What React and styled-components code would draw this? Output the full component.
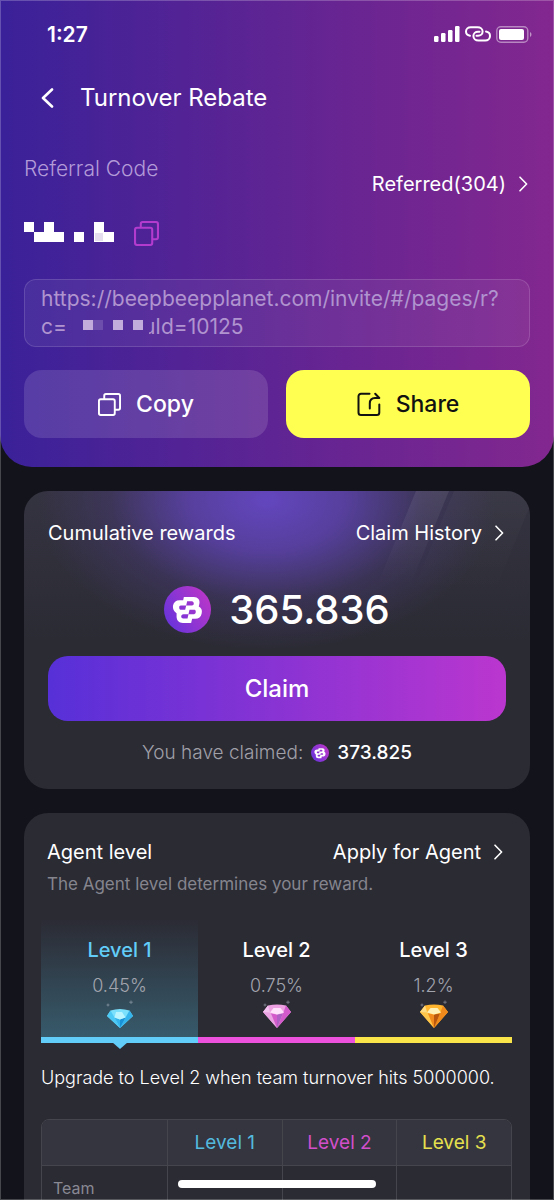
import React from "react";
import styled, { createGlobalStyle } from "styled-components";

const GlobalStyle = createGlobalStyle`
  * { box-sizing: border-box; }
  html, body { margin: 0; background: #13131b; }
  body { font-family: Inter, "Liberation Sans", sans-serif; color: #fff; }
  button { font: inherit; border: 0; cursor: pointer; }
  a { color: inherit; text-decoration: none; }
  h1, h2, p { margin: 0; font-weight: 400; }
  svg { display: block; flex: none; }
`;

const Page = styled.div`
  height: 100vh;
  overflow-y: auto;
  scrollbar-width: none;
  background: #13131b;
  &::after {
    content: "";
    position: fixed;
    inset: 0;
    border: 1px solid rgba(255, 255, 255, 0.22);
    pointer-events: none;
  }
`;

const Header = styled.header`
  padding: 20px 24px 29px;
  border-radius: 0 0 32px 32px;
  background: linear-gradient(90deg, #3a2199 0%, #5f2493 50%, #83278f 100%);
`;

const StatusBar = styled.div`
  display: flex;
  align-items: center;
  justify-content: space-between;
  height: 28px;
  padding-left: 23px;
  font-size: 21px;
  font-weight: 600;
`;

const StatusIcons = styled.div`
  display: flex;
  align-items: center;
  gap: 5px;
  margin-right: -3px;
`;

const NavBar = styled.nav`
  display: flex;
  align-items: center;
  gap: 26px;
  height: 40px;
  margin-top: 30px;
  padding-left: 17px;
`;

const PageTitle = styled.h1`
  font-size: 24px;
  line-height: 32px;
`;

const IconButton = styled.button`
  display: flex;
  padding: 0;
  background: none;
  color: ${(p) => p.$color || "#fff"};
`;

const Referral = styled.section`
  display: flex;
  justify-content: space-between;
  margin-top: 37px;
`;

const Label = styled.p`
  font-size: 21px;
  line-height: 28px;
  font-weight: 300;
  color: #b39bd8;
`;

const CodeRow = styled.div`
  display: flex;
  align-items: center;
  gap: 20px;
  margin-top: 38px;
`;

const MoreLink = styled.a`
  display: flex;
  align-items: center;
  align-self: flex-start;
  gap: 13px;
  margin-top: ${(p) => p.$drop || 0}px;
  padding-right: 2px;
  font-size: 20px;
  line-height: 28px;
  font-weight: 400;
`;

const LinkBox = styled.div`
  margin-top: 33px;
  padding: 5px 16px;
  border: 1px solid rgba(255, 255, 255, 0.14);
  border-radius: 12px;
  background: rgba(255, 255, 255, 0.06);
  color: #b094cf;
  font-size: 21px;
  line-height: 28px;
  font-weight: 400;
`;

const LinkLine = styled.div`
  display: flex;
  align-items: center;
`;

const MaskedPart = styled.span`
  margin: 0 0 0 16px;
`;

const CutLetter = styled.span`
  clip-path: inset(0 0 0 50%);
`;

const Actions = styled.div`
  display: grid;
  grid-template-columns: 1fr 1fr;
  gap: 18px;
  margin-top: 23px;
`;

const ActionButton = styled.button`
  display: flex;
  align-items: center;
  justify-content: center;
  gap: 15px;
  height: 68px;
  border-radius: 18px;
  font-size: 23px !important;
  font-weight: 500 !important;
  background: ${(p) => (p.$primary ? "#ffff52" : "rgba(255, 255, 255, 0.13)")};
  color: ${(p) => (p.$primary ? "#111" : "#fff")};
`;

const Main = styled.main`
  display: grid;
  gap: 24px;
  padding: 24px 24px 0;
`;

const Card = styled.section`
  position: relative;
  overflow: hidden;
  border-radius: 24px;
  background: #2b2b34;
`;

const RewardCard = styled(Card)`
  padding: 28px 24px 22px;
  background:
    radial-gradient(ellipse 230px 150px at 48% 3%, rgba(104, 72, 204, 0.9) 0%, rgba(98, 68, 188, 0.75) 34%, rgba(84, 62, 146, 0.3) 68%, rgba(70, 60, 110, 0) 100%),
    linear-gradient(180deg, #343340 0, #2b2b34 150px);
`;

const Streaks = styled.svg`
  position: absolute;
  top: 0;
  right: 0;
`;

const CardHead = styled.div`
  position: relative;
  display: flex;
  align-items: center;
  justify-content: space-between;
`;

const CardTitle = styled.h2`
  font-size: 20px;
  line-height: 28px;
`;

const Balance = styled.div`
  position: relative;
  display: flex;
  align-items: center;
  justify-content: center;
  gap: 18px;
  height: 48px;
  margin-top: 38px;
  font-size: 40px;
  font-weight: 500;
`;

const ClaimButton = styled.button`
  position: relative;
  width: 100%;
  height: 65px;
  margin-top: 23px;
  border-radius: 20px;
  background: linear-gradient(90deg, #5730d8, #bb36cf);
  color: #fff;
  font-size: 24px !important;
  font-weight: 500 !important;
`;

const Claimed = styled.p`
  display: flex;
  align-items: center;
  justify-content: center;
  gap: 8px;
  margin-top: 18px;
  font-size: 19px;
  line-height: 28px;
  font-weight: 300;
  color: #a0a0a8;
  strong { font-weight: 500; color: #fff; }
`;

const AgentCard = styled(Card)`
  padding: 25px 18px 0 17px;
`;

const AgentIntro = styled.div`
  padding: 0 7px 0 6px;
`;

const Hint = styled.p`
  margin-top: 6px;
  font-size: 17px;
  line-height: 24px;
  color: #85858e;
`;

const Tabs = styled.div`
  display: grid;
  grid-template-columns: repeat(3, 1fr);
  margin-top: 24px;
`;

const Tab = styled.button`
  position: relative;
  display: flex;
  flex-direction: column;
  align-items: center;
  height: 123px;
  padding: 16px 0 0;
  color: ${(p) => (p.$active ? p.$color : "#fff")};
  background: ${(p) => (p.$active ? "linear-gradient(180deg, rgba(55, 90, 107, 0) 0%, #375a6b 100%)" : "none")};
  border-bottom: 6px solid ${(p) => p.$color};
  font-size: 20px !important;
  line-height: 28px !important;
  font-weight: 500 !important;
  &::after {
    content: "";
    display: ${(p) => (p.$active ? "block" : "none")};
    position: absolute;
    bottom: -12px;
    border: 8px solid transparent;
    border-top: 7px solid ${(p) => p.$color};
    border-bottom: 0;
  }
`;

const Rate = styled.span`
  margin: 10px 0 4px;
  font-size: 18px;
  line-height: 24px;
  font-weight: 300;
  color: #a2a4ad;
`;

const Upgrade = styled.p`
  margin-top: 23px;
  font-size: 18px;
  line-height: 24px;
  font-weight: 300;
`;

const Levels = styled.table`
  width: 100%;
  margin-top: 29px;
  table-layout: fixed;
  border-collapse: separate;
  border-spacing: 0;
  border: 1px solid #45454e;
  border-radius: 8px 8px 0 0;
  th, td {
    padding: 0;
    border-left: 1px solid #45454e;
    font-weight: 300;
  }
  th:first-child, td:first-child { border-left: 0; width: 125px; }
  thead th {
    height: 46px;
    border-bottom: 1px solid #45454e;
    background: #35353f;
    font-size: 19px;
    font-weight: 400;
  }
  thead th:first-child { border-top-left-radius: 7px; }
  thead th:last-child { border-top-right-radius: 7px; }
  tbody th {
    height: 70px;
    padding: 10px 11px;
    vertical-align: top;
    text-align: left;
    font-size: 16px;
    line-height: 24px;
    font-weight: 400;
    color: #898993;
  }
`;

const LevelHead = styled.th`
  color: ${(p) => p.$color};
`;

const HomeIndicator = styled.div`
  position: fixed;
  bottom: 12px;
  left: 50%;
  width: 198px;
  height: 8px;
  transform: translateX(-50%);
  border-radius: 4px;
  background: #fff;
`;

const Chevron = () => (
  <svg width="9" height="16" viewBox="0 0 9 16" fill="none" stroke="currentColor" strokeWidth="1.6" strokeLinecap="round" strokeLinejoin="round" aria-hidden="true">
    <path d="M1 1.2 7.6 8 1 14.8" />
  </svg>
);

const CopyIcon = ({ size }) => (
  <svg width={size} height={size} viewBox="0 0 24 24" fill="none" stroke="currentColor" strokeWidth="2" strokeLinejoin="round" aria-hidden="true">
    <rect x="1" y="6.500" width="16.500" height="16.500" rx="1.800" />
    <path d="M6.500 6.500V2.800A1.800 1.800 0 0 1 8.300 1H21.200A1.800 1.800 0 0 1 23 2.800V15.700A1.800 1.800 0 0 1 21.200 17.500H17.500" />
  </svg>
);

const ShareIcon = () => (
  <svg width="24" height="24" viewBox="0 0 24 24" fill="none" stroke="currentColor" strokeWidth="2" strokeLinecap="round" strokeLinejoin="round" aria-hidden="true">
    <path d="M12.500 1.800H4A2.500 2.500 0 0 0 1.500 4.300V20.500A2.500 2.500 0 0 0 4 23H19.800A2.500 2.500 0 0 0 22.300 20.500V12.500" />
    <path d="M12.800 16.500V11.500C12.800 8 14.800 6 18 6H22.300L18.200 1.800" />
  </svg>
);

const Coin = ({ size, id }) => (
  <svg width={size} height={size} viewBox="0 0 142 142" aria-hidden="true">
    <defs>
      <linearGradient id={id} x1="0" y1="0.800" x2="1" y2="0.200">
        <stop offset="0" stopColor="#6534dc" />
        <stop offset="1" stopColor="#bd36c8" />
      </linearGradient>
    </defs>
    <circle cx="71" cy="71" r="71" fill={`url(#${id})`} />
    <path
      fill="#fff"
      fillRule="evenodd"
      d="M60 33H90C103 33 109 42 107 53L105 62C113 66 116 73 114 82C112 93 105 99 94 99H85L82 112H57C45 112 39 105 38 94L38 82C30 78 26 69 27 60C29 49 36 43 47 43H58ZM70 46 67 59H84C89 59 90 56 90 53C90 49 88 46 84 46ZM67 59H51C47 59 46 62 46 65C46 69 48 72 52 72H64ZM77 72 74 85H91C95 85 96 81 96 78C96 74 94 72 91 72ZM74 85H59C54 85 52 88 52 92C52 96 55 98 58 98H71Z"
    />
  </svg>
);

const GEMS = {
  blue: ["#7be0fb", "#b9f4ff", "#35b4ec", "#1992d8", "#4cc9f5"],
  pink: ["#eda0e2", "#ffe1fb", "#d35acb", "#b060c4", "#e9a3e2"],
  gold: ["#ffb62e", "#fff0b5", "#f08a1c", "#b9570e", "#ffc64c"],
};

const GemStone = ({ tone }) => {
  const [top, shine, right, dark, left] = GEMS[tone];
  if (tone === "blue") {
    return (
      <g>
        <path d="M5.500 8.500Q15 5.500 24.500 8.500L28 14 15 26 2 14Z" fill={top} />
        <path d="M2 14 5.500 8.500 9.500 15.500 15 26Z" fill={left} />
        <path d="M24.500 8.500 28 14 15 26 20.500 15.500Z" fill={right} />
        <path d="M9.500 15.500 15 17.500 20.500 15.500 15 26Z" fill={right} />
        <path d="M15 17.500 20.500 15.500 15 26Z" fill={dark} />
        <path d="M9.500 15.500 11 10H17L20.500 15.500 15 17.500Z" fill={shine} />
      </g>
    );
  }
  return (
    <g>
      <path d="M6 3.500Q15 1.500 24 3.500L29 10 15 26 1 10Z" fill={top} />
      <path d="M1 10 6 3.500 9 11.500 15 26Z" fill={left} />
      <path d="M24 3.500 29 10 15 26 21 11.500Z" fill={right} />
      <path d="M9 11.500 15 12.500V26Z" fill={right} />
      <path d="M15 12.500 21 11.500 15 26Z" fill={dark} />
      <path d="M8 10.500 11.500 6H18.500L22 10.500 15 12.500Z" fill={shine} />
      <path d="M1 10 8 10.500 6 3.500Z" fill={shine} opacity=".5" />
    </g>
  );
};

const Gem = ({ tone }) => (
  <svg width="30" height="26" viewBox="0 0 30 26" overflow="visible" aria-hidden="true">
    <GemStone tone={tone} />
    <path d="M3 1.500V4.500M1.500 3H4.500M26 -1.500V2M24.200 .2H27.800" stroke="#b5bcc8" strokeWidth=".7" opacity=".7" />
  </svg>
);

const LEVELS = [
  { name: "Level 1", rate: "0.45%", color: "#62cdf8", text: "#53b9de", gem: "blue" },
  { name: "Level 2", rate: "0.75%", color: "#eb51dc", text: "#d24fcb", gem: "pink" },
  { name: "Level 3", rate: "1.2%", color: "#fae54a", text: "#e6e04e", gem: "gold" },
];

export default function App() {
  return (
    <Page>
      <GlobalStyle />
      <Header>
        <StatusBar>
          <span>1:27</span>
          <StatusIcons>
            <svg width="26" height="16" viewBox="0 0 26 16" fill="#fff" aria-hidden="true">
              <rect x="0" y="10" width="4.500" height="6" rx="1.200" />
              <rect x="7" y="7" width="4.500" height="9" rx="1.200" />
              <rect x="14" y="4" width="4.500" height="12" rx="1.200" />
              <rect x="21" y="0" width="4.500" height="16" rx="1.200" />
            </svg>
            <svg width="26" height="16" viewBox="0 0 26 16" fill="none" stroke="#fff" strokeWidth="2" strokeLinecap="round" aria-hidden="true">
              <path d="M5 9.800C2.500 9.300 1 7.600 1 5.500C1 3 3 1.200 5.800 1.200H12.500C15.500 1.200 17.600 3 17.600 5.500C17.600 8 15.600 9.800 13 9.800H11.500" />
              <path d="M21 5.600C23.500 6 25 7.800 25 10C25 12.700 23 14.600 20.200 14.600H13.500C10.500 14.600 8.400 12.600 8.400 10C8.400 7.500 10.400 5.700 13 5.700H14.500" />
            </svg>
            <svg width="37" height="17" viewBox="0 0 37 17" aria-hidden="true">
              <rect x=".8" y=".8" width="31" height="15.400" rx="4" fill="none" stroke="#fff" strokeOpacity=".45" strokeWidth="1.400" />
              <rect x="3" y="3" width="25" height="11" rx="2" fill="#fff" />
              <path d="M34 6C36 7 36 10 34 11Z" fill="#fff" fillOpacity=".5" />
            </svg>
          </StatusIcons>
        </StatusBar>

        <NavBar>
          <IconButton aria-label="Back">
            <svg width="13" height="20" viewBox="0 0 13 20" fill="none" stroke="currentColor" strokeWidth="2.600" strokeLinecap="round" strokeLinejoin="round">
              <path d="M11 1.500 2 10 11 18.500" />
            </svg>
          </IconButton>
          <PageTitle>Turnover Rebate</PageTitle>
        </NavBar>

        <Referral>
          <div>
            <Label>Referral Code</Label>
            <CodeRow>
              <svg width="90" height="24" viewBox="0 0 90 24" fill="#fff" role="img" aria-label="Hidden code">
                <path d="M0 0H10V10H20V0H30V10H40V20H10V10H0ZM50 10H60V20H50ZM70 0H80V10H90V20H70Z" />
                <rect x="71" y="11" width="8" height="8" fill="#e4deee" />
              </svg>
              <IconButton $color="#b33ccf" aria-label="Copy referral code">
                <CopyIcon size={25} />
              </IconButton>
            </CodeRow>
          </div>
          <MoreLink href="#referred" $drop={15}>
            Referred(304) <Chevron />
          </MoreLink>
        </Referral>

        <LinkBox>
          <LinkLine>https://beepbeepplanet.com/invite/#/pages/r?</LinkLine>
          <LinkLine>
            c=
            <MaskedPart>
              <svg width="60" height="16" viewBox="0 0 60 16" fill="#c2acdb" aria-hidden="true">
                <path d="M0 1H10V11H0ZM30 1H40V11H30ZM50 1H60V11H50Z" />
                <rect x="10" y="1" width="10" height="10" fillOpacity=".25" />
              </svg>
            </MaskedPart>
            <CutLetter>u</CutLetter>Id=10125
          </LinkLine>
        </LinkBox>

        <Actions>
          <ActionButton>
            <CopyIcon size={23} /> Copy
          </ActionButton>
          <ActionButton $primary>
            <ShareIcon /> Share
          </ActionButton>
        </Actions>
      </Header>

      <Main>
        <RewardCard>
          <Streaks width="200" height="170" viewBox="-60 0 200 170" aria-hidden="true">
            <defs>
              <linearGradient id="streak" x1="0" y1="0" x2="0" y2="1">
                <stop offset="0" stopColor="#fff" stopOpacity=".08" />
                <stop offset=".55" stopColor="#fff" stopOpacity="0" />
              </linearGradient>
              <linearGradient id="streak-soft" x1="0" y1="0" x2="0" y2="1">
                <stop offset="0" stopColor="#fff" stopOpacity=".03" />
                <stop offset=".6" stopColor="#fff" stopOpacity="0" />
              </linearGradient>
            </defs>
            <path d="M26 0H59L-11 170H-44Z" fill="url(#streak)" />
            <path d="M64 0H146L76 170H-6Z" fill="url(#streak-soft)" />
          </Streaks>
          <CardHead>
            <CardTitle>Cumulative rewards</CardTitle>
            <MoreLink href="#history">
              Claim History <Chevron />
            </MoreLink>
          </CardHead>
          <Balance>
            <Coin size={47} id="coin-large" /> 365.836
          </Balance>
          <ClaimButton>Claim</ClaimButton>
          <Claimed>
            You have claimed: <Coin size={18} id="coin-small" /> <strong>373.825</strong>
          </Claimed>
        </RewardCard>

        <AgentCard>
          <AgentIntro>
            <CardHead>
              <CardTitle>Agent level</CardTitle>
              <MoreLink href="#apply">
                Apply for Agent <Chevron />
              </MoreLink>
            </CardHead>
            <Hint>The Agent level determines your reward.</Hint>
          </AgentIntro>
          <Tabs role="tablist">
            {LEVELS.map((level, i) => (
              <Tab key={level.name} role="tab" aria-selected={i === 0} $active={i === 0} $color={level.color}>
                {level.name}
                <Rate>{level.rate}</Rate>
                <Gem tone={level.gem} />
              </Tab>
            ))}
          </Tabs>
          <Upgrade>Upgrade to Level 2 when team turnover hits 5000000.</Upgrade>
          <Levels>
            <thead>
              <tr>
                <th />
                {LEVELS.map((level) => (
                  <LevelHead key={level.name} scope="col" $color={level.text}>
                    {level.name}
                  </LevelHead>
                ))}
              </tr>
            </thead>
            <tbody>
              <tr>
                <th scope="row">Team</th>
                <td />
                <td />
                <td />
              </tr>
            </tbody>
          </Levels>
        </AgentCard>
      </Main>
      <HomeIndicator />
    </Page>
  );
}
